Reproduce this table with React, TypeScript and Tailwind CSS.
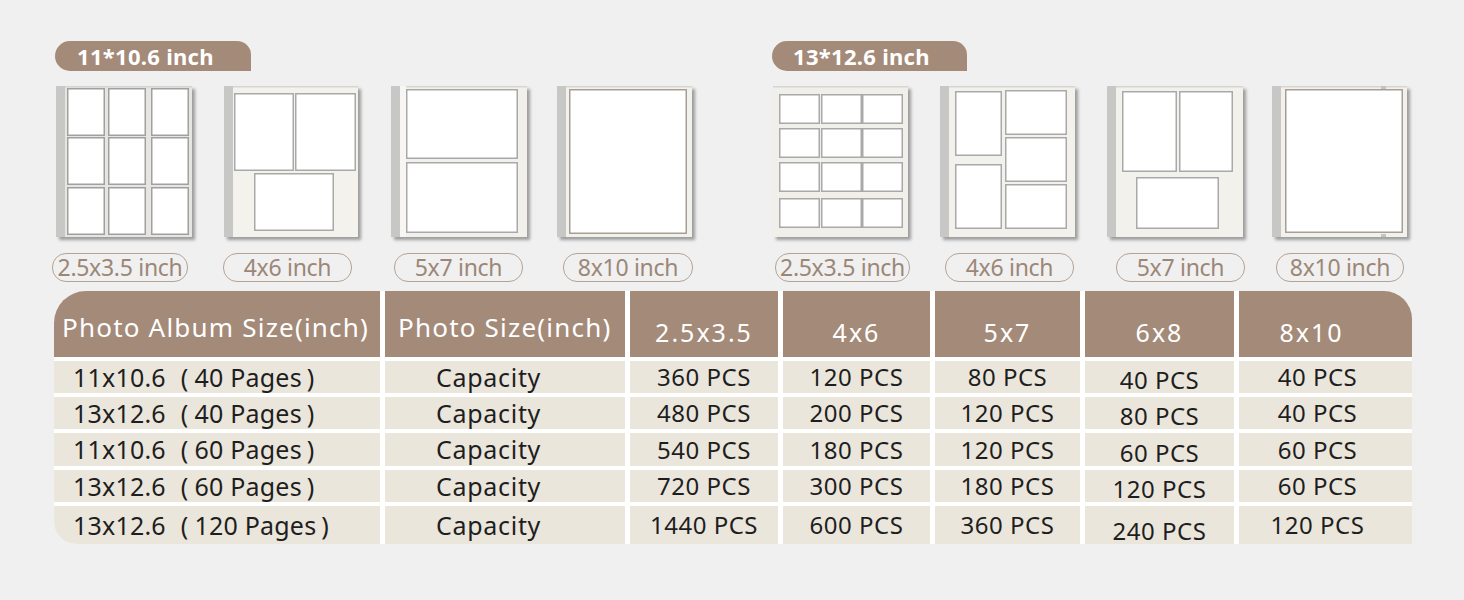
import React from "react";

type Slot = [number, number, number, number];
type Thumb = {
  w: number;
  spine: boolean;
  bg: string;
  slots: Slot[];
  strip?: boolean;
  rim?: boolean;
  stroke?: string;
};

const grid = (xs: number[], w: number, ys: number[], h: number): Slot[] =>
  ys.flatMap((y) => xs.map((x) => [x, y, w, h] as Slot));

const leftThumbs: Thumb[] = [
  { w: 136, spine: true, bg: "#e6e5e1", slots: grid([11, 52, 95], 38, [2, 51, 101], 48), stroke: "#a0a0a0" },
  { w: 134, spine: true, bg: "#f4f2ed", slots: [[10, 7, 60, 78], [71, 7, 61, 78], [30, 87, 80, 58]] },
  { w: 136, spine: true, bg: "#f2f0eb", strip: true, slots: [[15, 3, 112, 70], [15, 76, 112, 71]] },
  { w: 135, spine: true, bg: "#f3f1ec", slots: [[12, 3, 118, 145]], stroke: "#a89e96" },
];

const rightThumbs: Thumb[] = [
  { w: 135, spine: false, bg: "#f1efea", slots: grid([6, 48, 89], 41, [8, 42, 76, 112], 30) },
  { w: 135, spine: true, bg: "#f3f1ec", slots: [[15, 5, 47, 65], [15, 78, 47, 65], [65, 4, 62, 45], [65, 51, 62, 45], [65, 98, 62, 45]] },
  { w: 136, spine: true, bg: "#f3f1ec", slots: [[15, 5, 55, 81], [72, 5, 54, 81], [29, 91, 83, 52]] },
  { w: 135, spine: true, bg: "#f3f1ec", rim: true, slots: [[13, 3, 118, 144]], stroke: "#a89e96" },
];

function Page({ t }: { t: Thumb }) {
  const h = 151;
  return (
    <div className="shrink-0 shadow-[3px_3px_3px_rgba(0,0,0,0.35)]" style={{ width: t.w, height: h }}>
      <svg width={t.w} height={h} viewBox={`0 0 ${t.w} ${h}`} className="block">
        <rect x={0} y={0} width={t.w} height={h} fill={t.bg} />
        <rect x={0} y={0} width={t.w} height={1.5} fill="#d6d5d2" />
        {t.spine && <rect x={0} y={0} width={9} height={h} fill="#c7c7c5" />}
        {t.strip && <rect x={9} y={0} width={6} height={h} fill="#f7f6f2" />}
        {t.rim && (
          <>
            <rect x={109} y={0} width={5} height={3} fill="#c4c4c2" />
            <rect x={109} y={148} width={5} height={3} fill="#c4c4c2" />
          </>
        )}
        {t.slots.map(([x, y, w, hh], i) => (
          <rect
            key={i}
            x={x + 0.75}
            y={y + 0.75}
            width={w - 1.5}
            height={hh - 1.5}
            fill="#ffffff"
            stroke={t.stroke ?? "#a9a9a9"}
            strokeWidth={1.5}
          />
        ))}
      </svg>
    </div>
  );
}

function Pill({ label, w, className }: { label: string; w: number; className?: string }) {
  return (
    <div
      className={`shrink-0 h-[29px] rounded-[14px] border-[1.5px] border-[#b6a393] flex items-center justify-center text-[23px] leading-none text-[#9c8777] tracking-[-0.3px] ${className ?? ""}`}
      style={{ width: w }}
    >
      {label}
    </div>
  );
}

const rows = [
  ["11x10.6", "40 Pages", "360 PCS", "120 PCS", "80 PCS", "40 PCS", "40 PCS"],
  ["13x12.6", "40 Pages", "480 PCS", "200 PCS", "120 PCS", "80 PCS", "40 PCS"],
  ["11x10.6", "60 Pages", "540 PCS", "180 PCS", "120 PCS", "60 PCS", "60 PCS"],
  ["13x12.6", "60 Pages", "720 PCS", "300 PCS", "180 PCS", "120 PCS", "60 PCS"],
  ["13x12.6", "120 Pages", "1440 PCS", "600 PCS", "360 PCS", "240 PCS", "120 PCS"],
];

const rowHeights = ["h-[32px]", "h-[32px]", "h-[33px]", "h-[32px]", "h-[38px]"];

const cell = "bg-[#ebe6dc] flex items-center leading-none text-[#1e1e1e] whitespace-nowrap";

export default function App() {
  return (
    <div className="w-[1464px] h-[600px] bg-[#f0f0f0] overflow-hidden pt-[41px] font-['Noto_Sans','Noto_Sans_CJK_SC',sans-serif]">
      {/* size tabs */}
      <div className="flex h-[30px]">
        <div className="ml-[55px] w-[196px] h-[30px] bg-[#a48a78] rounded-l-[15px] rounded-tr-[14px] flex items-center pl-[22px] text-white font-bold text-[22px] leading-none tracking-[0.3px]">
          11*10.6 inch
        </div>
        <div className="ml-[521px] w-[195px] h-[30px] bg-[#a48a78] rounded-l-[15px] rounded-tr-[14px] flex items-center pl-[21px] text-white font-bold text-[22px] leading-none tracking-[0.3px]">
          13*12.6 inch
        </div>
      </div>

      {/* page thumbnails */}
      <div className="flex mt-[15px]">
        <div className="ml-[56px]"><Page t={leftThumbs[0]} /></div>
        <div className="ml-[32px]"><Page t={leftThumbs[1]} /></div>
        <div className="ml-[33px]"><Page t={leftThumbs[2]} /></div>
        <div className="ml-[30px]"><Page t={leftThumbs[3]} /></div>
        <div className="ml-[81px]"><Page t={rightThumbs[0]} /></div>
        <div className="ml-[32px]"><Page t={rightThumbs[1]} /></div>
        <div className="ml-[32px]"><Page t={rightThumbs[2]} /></div>
        <div className="ml-[29px]"><Page t={rightThumbs[3]} /></div>
      </div>

      {/* size pills */}
      <div className="flex mt-[16px]">
        <Pill label="2.5x3.5 inch" w={136} className="ml-[52px]" />
        <Pill label="4x6 inch" w={129} className="ml-[35px]" />
        <Pill label="5x7 inch" w={129} className="ml-[42px]" />
        <Pill label="8x10 inch" w={130} className="ml-[40px]" />
        <Pill label="2.5x3.5 inch" w={135} className="ml-[82px]" />
        <Pill label="4x6 inch" w={129} className="ml-[35px]" />
        <Pill label="5x7 inch" w={129} className="ml-[42px]" />
        <Pill label="8x10 inch" w={128} className="ml-[31px]" />
      </div>

      {/* capacity table */}
      <div className="mt-[9px] ml-[54px] w-[1358px] bg-white rounded-tl-[32px] rounded-tr-[28px] rounded-bl-[22px]">
        <div className="grid grid-cols-[326px_240px_148px_147px_145px_149px_173px] gap-x-[5px] gap-y-[4px]">
          {/* header */}
          <div className="h-[66px] bg-[#a48a78] rounded-tl-[32px] text-white text-[26px] leading-none tracking-[1.2px] flex items-center pl-[8px] pt-[6px]">
            Photo Album Size(inch)
          </div>
          <div className="h-[66px] bg-[#a48a78] text-white text-[26px] leading-none tracking-[1.2px] flex items-center pl-[13px] pt-[6px]">
            Photo Size(inch)
          </div>
          {["2.5x3.5", "4x6", "5x7", "6x8"].map((s) => (
            <div key={s} className="h-[66px] bg-[#a48a78] text-white text-[25px] leading-none tracking-[2px] flex items-center justify-center pt-[16px]">
              {s}
            </div>
          ))}
          <div className="h-[66px] bg-[#a48a78] rounded-tr-[28px] text-white text-[25px] leading-none tracking-[2px] flex items-center justify-center pr-[28px] pt-[16px]">
            8x10
          </div>

          {rows.map((r, i) => {
            const hc = rowHeights[i];
            const last = i === rows.length - 1;
            return (
              <React.Fragment key={i}>
                <div className={`${hc} ${cell} ${last ? "rounded-bl-[22px]" : ""} pl-[19px] text-[25px] tracking-[0.2px]`}>
                  {r[0]}
                  <span className="ml-[15px] mr-[6px]">(</span>
                  {r[1]}
                  <span className="ml-[5px]">)</span>
                </div>
                <div className={`${hc} ${cell} pl-[51px] text-[25px] tracking-[0.7px]`}>
                  Capacity
                </div>
                <div className={`${hc} ${cell} justify-center text-[24px] tracking-[0.5px]`}>
                  {r[2]}
                </div>
                <div className={`${hc} ${cell} justify-center text-[24px] tracking-[0.5px]`}>
                  {r[3]}
                </div>
                <div className={`${hc} ${cell} justify-center text-[24px] tracking-[0.5px]`}>
                  {r[4]}
                </div>
                <div className={`${hc} ${cell} justify-center items-end pb-[1px] text-[24px] tracking-[0.5px]`}>
                  {r[5]}
                </div>
                <div className={`${hc} ${cell} justify-center pr-[16px] text-[24px] tracking-[0.5px]`}>
                  {r[6]}
                </div>
              </React.Fragment>
            );
          })}
        </div>
      </div>
    </div>
  );
}
